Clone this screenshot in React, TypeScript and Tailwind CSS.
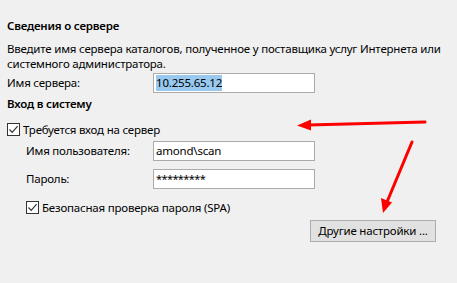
import React from "react";

function Check() {
  return (
    <span className="flex h-[13px] w-[13px] shrink-0 items-center justify-center border border-[#333333] bg-white">
      <svg width="11" height="11" viewBox="0 0 11 11">
        <path d="M1.5 5.5 L4.2 8.3 L9.6 2.2" fill="none" stroke="#333333" strokeWidth="1.2" />
      </svg>
    </span>
  );
}

function Field({ children }: { children?: React.ReactNode }) {
  return (
    <div className="flex h-[20px] w-[162px] items-center border border-[#ababab] bg-white pl-[2px] text-black">
      {children}
    </div>
  );
}

export default function App() {
  return (
    <div
      className="relative h-[283px] w-[457px] overflow-hidden bg-[#f0f0f0] text-black"
      style={{ fontFamily: '"Noto Sans", "DejaVu Sans", sans-serif' }}
    >
      <div className="flex flex-col whitespace-nowrap pl-[7px] pt-[18px] text-[11.5px] tracking-[-0.2px]">
        <div className="h-[16px] font-semibold leading-[16px]">Сведения о сервере</div>
        <div className="mt-[7px] leading-[15px]">
          <div>Введите имя сервера каталогов, полученное у поставщика услуг Интернета или</div>
          <div>системного администратора.</div>
        </div>
        <div className="mt-[2px] flex items-center">
          <div className="w-[146px] leading-[16px]">Имя сервера:</div>
          <Field>
            <span className="bg-[#99c9ef] leading-[16px]">10.255.65.12</span>
          </Field>
        </div>
        <div className="mt-[3px] h-[16px] font-semibold leading-[16px]">Вход в систему</div>
        <div className="mt-[10px] flex h-[15px] items-center gap-[3px]">
          <Check />
          <span className="leading-[15px]">Требуется вход на сервер</span>
        </div>
        <div className="mt-[4px] flex items-center pl-[19px]">
          <div className="w-[127px] leading-[16px]">Имя пользователя:</div>
          <Field>amond\scan</Field>
        </div>
        <div className="mt-[8px] flex items-center pl-[19px]">
          <div className="w-[127px] leading-[16px]">Пароль:</div>
          <Field>
            <span className="text-[11px] tracking-[-0.6px]">*********</span>
          </Field>
        </div>
        <div className="mt-[11px] flex h-[15px] items-center gap-[3px] pl-[19px]">
          <Check />
          <span className="leading-[15px]">Безопасная проверка пароля (SPA)</span>
        </div>
        <div className="mt-[5px] flex justify-end pr-[21px]">
          <button className="flex h-[22px] w-[126px] items-center justify-center border border-[#adadad] bg-[#e1e1e1] leading-[16px]">
            Другие настройки ...
          </button>
        </div>
      </div>
      <svg className="pointer-events-none absolute left-0 top-0" width="457" height="283" viewBox="0 0 457 283">
        <line x1="425" y1="122" x2="308" y2="125" stroke="#ff0000" strokeWidth="3" strokeLinecap="round" />
        <polygon points="297,125.5 311,119.5 311,130.5" fill="#ff0000" />
        <line x1="412" y1="142" x2="387" y2="202" stroke="#ff0000" strokeWidth="3" strokeLinecap="round" />
        <polygon points="383,213 381,198 392,202.5" fill="#ff0000" />
      </svg>
    </div>
  );
}
